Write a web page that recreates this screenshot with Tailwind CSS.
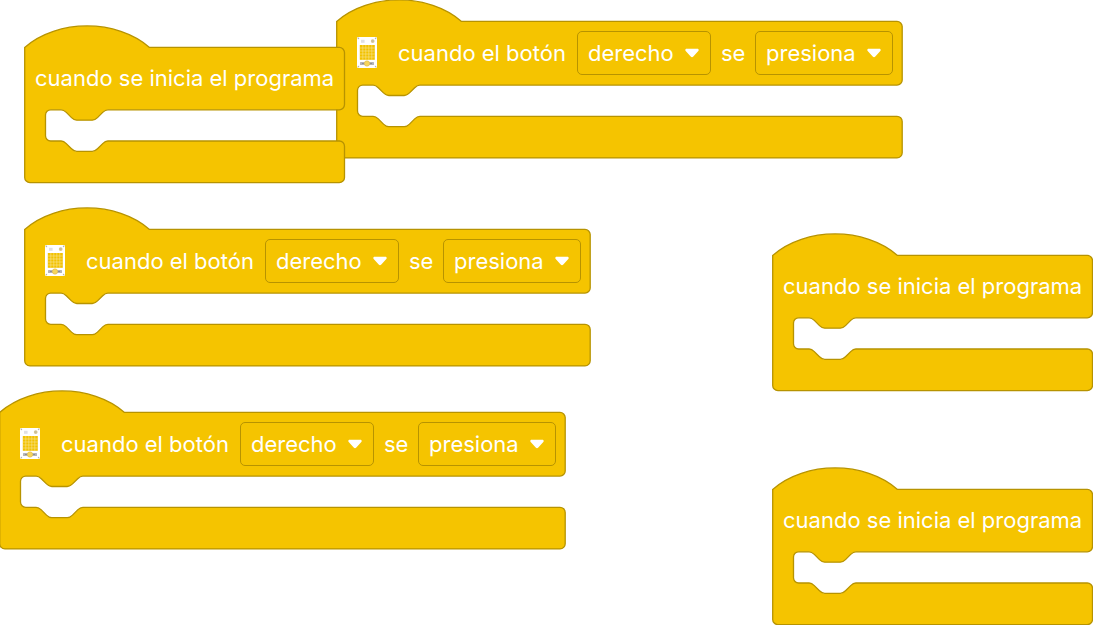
<!DOCTYPE html>
<html lang="es">
<head>
<meta charset="utf-8">
<meta name="viewport" content="width=device-width, initial-scale=1">
<title>Bloques de eventos</title>
<script src="https://cdn.jsdelivr.net/npm/@tailwindcss/browser@4"></script>
</head>
<body class="bg-white font-[Inter,sans-serif] text-[22px] leading-7 text-white">

<!-- Shared shapes -->
<svg class="hidden" aria-hidden="true">
  <symbol id="start-block" overflow="visible">
    <g transform="translate(0.7 21.4) scale(1.3)">
      <path fill="#f5c400" stroke="#b79300" d="M0 0c25-22 71-22 96 0H242a4 4 0 0 1 4 4V44a4 4 0 0 1-4 4H64c-2 0-3 1-4 2l-4 4c-1 1-2 2-4 2H40c-2 0-3-1-4-2l-4-4c-1-1-2-2-4-2H20a4 4 0 0 0-4 4V68a4 4 0 0 0 4 4h8c2 0 3 1 4 2l4 4c1 1 2 2 4 2H52c2 0 3-1 4-2l4-4c1-1 2-2 4-2H242a4 4 0 0 1 4 4V100a4 4 0 0 1-4 4H4a4 4 0 0 1-4-4Z"/>
    </g>
  </symbol>
  <symbol id="button-block" overflow="visible">
    <g transform="translate(0.7 21.4) scale(1.3)">
      <path fill="#f5c400" stroke="#b79300" d="M0 0c25-22 71-22 96 0H431a4 4 0 0 1 4 4V45a4 4 0 0 1-4 4H64c-2 0-3 1-4 2l-4 4c-1 1-2 2-4 2H40c-2 0-3-1-4-2l-4-4c-1-1-2-2-4-2H20a4 4 0 0 0-4 4V69a4 4 0 0 0 4 4h8c2 0 3 1 4 2l4 4c1 1 2 2 4 2H52c2 0 3-1 4-2l4-4c1-1 2-2 4-2H431a4 4 0 0 1 4 4V101a4 4 0 0 1-4 4H4a4 4 0 0 1-4-4Z"/>
    </g>
  </symbol>
  <symbol id="brick" viewBox="0 0 20 31">
    <rect width="20" height="31" rx="1.2" fill="#fff"/>
    <g fill="#b5b5b5"><circle cx="1.4" cy="1.4" r=".8"/><circle cx="18.6" cy="1.4" r=".8"/><circle cx="1.4" cy="29.6" r=".8"/><circle cx="18.6" cy="29.6" r=".8"/></g>
    <rect x="4" y="2.8" width="3.6" height="3" fill="#e0e0e4"/>
    <circle cx="15.7" cy="4.1" r="1.9" fill="#d8c68e"/>
    <circle cx="15.7" cy="4.1" r=".8" fill="#bcb7a8"/>
    <rect x="2.8" y="8" width="15" height="14.8" fill="#f2c200"/>
    <path d="M5.8 8v14.8M8.8 8v14.8M11.8 8v14.8M14.8 8v14.8M2.8 11h15M2.8 14h15M2.8 17h15M2.8 20h15" stroke="#f9e9a8" stroke-width=".5"/>
    <rect x="3" y="25" width="14" height="3" rx=".5" fill="#b4b4b8"/>
    <path d="M5 26.5h2M13 26.5h2" stroke="#8c8c92"/>
    <circle cx="10" cy="26.5" r="2.7" fill="#f6d55c" stroke="#d8b24a" stroke-width=".5"/>
  </symbol>
  <symbol id="caret" viewBox="0 0 14 10">
    <path d="M1.6 .7H12.4C13.7 .7 14.1 2.2 13.3 3L8.3 8.5C7.5 9.4 6.5 9.4 5.7 8.5L.7 3C-.1 2.2.3 .7 1.6 .7Z" fill="#fff"/>
  </symbol>
</svg>

<main class="relative min-h-screen overflow-hidden">

  <section class="absolute top-0 left-[336px] w-[567px] h-[158px]">
    <svg class="absolute inset-0 size-full overflow-visible" aria-hidden="true"><use href="#button-block"/></svg>
    <div class="relative flex items-center pt-[31px] pl-[21px]">
      <svg class="w-5 h-[31px] mr-[21px] mb-[2px]" aria-hidden="true"><use href="#brick"/></svg>
      <span class="w-[169px] mr-2.5 whitespace-nowrap">cuando el botón</span>
      <label class="relative mr-2.5"><select aria-label="botón" class="block appearance-none w-[134px] h-[44px] pl-2.5 rounded-[5px] border border-[#b79300] bg-transparent"><option>derecho</option></select><svg class="absolute right-3 top-[17px] w-3.5 h-2.5 pointer-events-none"><use href="#caret"/></svg></label>
      <span class="w-6 mr-2.5">se</span>
      <label class="relative"><select aria-label="evento" class="block appearance-none w-[138px] h-[44px] pl-2.5 rounded-[5px] border border-[#b79300] bg-transparent"><option>presiona</option></select><svg class="absolute right-3 top-[17px] w-3.5 h-2.5 pointer-events-none"><use href="#caret"/></svg></label>
    </div>
  </section>

  <section class="absolute top-[26px] left-6 w-[321px] h-[157px]">
    <svg class="absolute inset-0 size-full overflow-visible" aria-hidden="true"><use href="#start-block"/></svg>
    <p class="relative pt-[38px] pl-[11px] whitespace-nowrap">cuando se inicia el programa</p>
  </section>

  <section class="absolute top-[208px] left-6 w-[567px] h-[158px]">
    <svg class="absolute inset-0 size-full overflow-visible" aria-hidden="true"><use href="#button-block"/></svg>
    <div class="relative flex items-center pt-[31px] pl-[21px]">
      <svg class="w-5 h-[31px] mr-[21px] mb-[2px]" aria-hidden="true"><use href="#brick"/></svg>
      <span class="w-[169px] mr-2.5 whitespace-nowrap">cuando el botón</span>
      <label class="relative mr-2.5"><select aria-label="botón" class="block appearance-none w-[134px] h-[44px] pl-2.5 rounded-[5px] border border-[#b79300] bg-transparent"><option>derecho</option></select><svg class="absolute right-3 top-[17px] w-3.5 h-2.5 pointer-events-none"><use href="#caret"/></svg></label>
      <span class="w-6 mr-2.5">se</span>
      <label class="relative"><select aria-label="evento" class="block appearance-none w-[138px] h-[44px] pl-2.5 rounded-[5px] border border-[#b79300] bg-transparent"><option>presiona</option></select><svg class="absolute right-3 top-[17px] w-3.5 h-2.5 pointer-events-none"><use href="#caret"/></svg></label>
    </div>
  </section>

  <section class="absolute top-[391px] -left-px w-[567px] h-[158px]">
    <svg class="absolute inset-0 size-full overflow-visible" aria-hidden="true"><use href="#button-block"/></svg>
    <div class="relative flex items-center pt-[31px] pl-[21px]">
      <svg class="w-5 h-[31px] mr-[21px] mb-[2px]" aria-hidden="true"><use href="#brick"/></svg>
      <span class="w-[169px] mr-2.5 whitespace-nowrap">cuando el botón</span>
      <label class="relative mr-2.5"><select aria-label="botón" class="block appearance-none w-[134px] h-[44px] pl-2.5 rounded-[5px] border border-[#b79300] bg-transparent"><option>derecho</option></select><svg class="absolute right-3 top-[17px] w-3.5 h-2.5 pointer-events-none"><use href="#caret"/></svg></label>
      <span class="w-6 mr-2.5">se</span>
      <label class="relative"><select aria-label="evento" class="block appearance-none w-[138px] h-[44px] pl-2.5 rounded-[5px] border border-[#b79300] bg-transparent"><option>presiona</option></select><svg class="absolute right-3 top-[17px] w-3.5 h-2.5 pointer-events-none"><use href="#caret"/></svg></label>
    </div>
  </section>

  <section class="absolute top-[234px] left-[772px] w-[321px] h-[157px]">
    <svg class="absolute inset-0 size-full overflow-visible" aria-hidden="true"><use href="#start-block"/></svg>
    <p class="relative pt-[38px] pl-[11px] whitespace-nowrap">cuando se inicia el programa</p>
  </section>

  <section class="absolute top-[468px] left-[772px] w-[321px] h-[157px]">
    <svg class="absolute inset-0 size-full overflow-visible" aria-hidden="true"><use href="#start-block"/></svg>
    <p class="relative pt-[38px] pl-[11px] whitespace-nowrap">cuando se inicia el programa</p>
  </section>

</main>
</body>
</html>
